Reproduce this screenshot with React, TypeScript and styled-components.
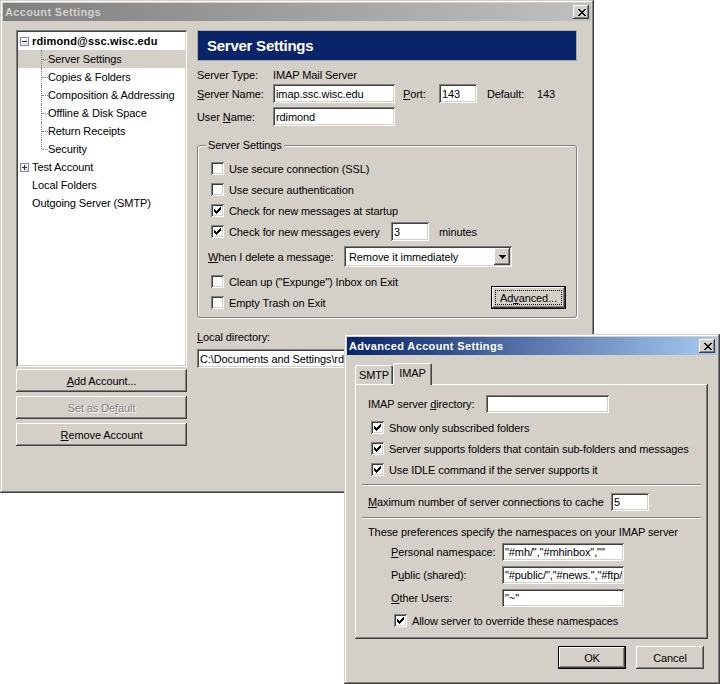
import React from 'react';
import styled, { createGlobalStyle, css } from 'styled-components';

const FACE = '#d4d0c8';
const raised = `inset -1px -1px #404040, inset 1px 1px #fff, inset -2px -2px #808080, inset 2px 2px ${FACE}`;
const raisedDefault = `inset 0 0 0 1px #000, inset -2px -2px #404040, inset 2px 2px #fff, inset -3px -3px #808080, inset 3px 3px ${FACE}`;
const sunken = `inset 1px 1px #808080, inset -1px -1px #fff, inset 2px 2px #404040, inset -2px -2px ${FACE}`;
const frame = `inset -1px -1px #404040, inset 1px 1px ${FACE}, inset -2px -2px #808080, inset 2px 2px #fff`;
const panelFrame = `inset -1px -1px #404040, inset 1px 1px #fff, inset -2px -2px #808080`;

const GlobalStyle = createGlobalStyle`
    html, body {
        margin: 0;
        padding: 0;
        background: #fff;
    }
    body {
        font-family: "Liberation Sans", Arial, sans-serif;
        font-size: 11px;
        letter-spacing: -0.1px;
        color: #000;
    }
    * {
        box-sizing: border-box;
    }
`;

const children = [
    'Server Settings',
    'Copies & Folders',
    'Composition & Addressing',
    'Offline & Disk Space',
    'Return Receipts',
    'Security'
];

const CloseGlyph = () => (
    <svg width="8" height="7" viewBox="0 0 8 7" shapeRendering="crispEdges">
        <path
            d="M0 0h2v1h-2z M6 0h2v1h-2z M1 1h2v1h-2z M5 1h2v1h-2z M2 2h4v1h-4z M3 3h2v1h-2z M2 4h4v1h-4z M1 5h2v1h-2z M5 5h2v1h-2z M0 6h2v1h-2z M6 6h2v1h-2z"
            fill="#000"
        />
    </svg>
);

const Check = ({ checked }: { checked?: boolean }) => (
    <CheckBox>
        {checked && (
            <svg width="13" height="13" viewBox="0 0 13 13" shapeRendering="crispEdges">
                <path
                    d="M9 3h1v1h-1z M8 4h2v1h-2z M3 5h1v1h-1z M7 5h3v1h-3z M3 6h2v1h-2z M6 6h3v1h-3z M3 7h5v1h-5z M4 8h3v1h-3z M5 9h1v1h-1z"
                    fill="#000"
                />
            </svg>
        )}
    </CheckBox>
);

const Expander = ({ open }: { open?: boolean }) => (
    <ExpanderSvg width="9" height="9" viewBox="0 0 9 9" shapeRendering="crispEdges">
        <defs>
            <linearGradient id={open ? 'exp-open' : 'exp-closed'} x1="0" y1="0" x2="1" y2="1">
                <stop offset="0" stopColor="#ffffff" />
                <stop offset="1" stopColor="#dcdad4" />
            </linearGradient>
        </defs>
        <rect x="0.5" y="0.5" width="8" height="8" fill={`url(#${open ? 'exp-open' : 'exp-closed'})`} stroke="#7a8aa8" />
        <path d="M2 4h5v1h-5z" fill="#1e2f52" />
        {!open && <path d="M4 2h1v5h-1z" fill="#1e2f52" />}
    </ExpanderSvg>
);

export default function App() {
    return (
        <>
            <GlobalStyle />
            <Desktop>
                <Win $x={0} $y={0} $w={594} $h={493}>
                    <TitleBar>
                        <span>Account Settings</span>
                        <CloseButton><CloseGlyph /></CloseButton>
                    </TitleBar>
                    <AccountBody>
                        <LeftCol>
                            <Tree>
                                <TreeRow $pad={2} $bold><Expander open />rdimond@ssc.wisc.edu</TreeRow>
                                {children.map((c, i) => (
                                    <TreeRow
                                        key={c}
                                        $pad={30}
                                        $child
                                        $last={i === children.length - 1}
                                        $selected={i === 0}
                                    >
                                        {c}
                                    </TreeRow>
                                ))}
                                <TreeRow $pad={2}><Expander />Test Account</TreeRow>
                                <TreeRow $pad={14}>Local Folders</TreeRow>
                                <TreeRow $pad={14}>Outgoing Server (SMTP)</TreeRow>
                            </Tree>
                            <SideButtons>
                                <Button><Key>A</Key>dd Account...</Button>
                                <Button disabled>Set as De<Key>f</Key>ault</Button>
                                <Button><Key>R</Key>emove Account</Button>
                            </SideButtons>
                        </LeftCol>

                        <RightCol>
                            <PageHeader>Server Settings</PageHeader>
                            <FormRow $mt={5} $h={17}>
                                <Label $w={76}>Server Type:</Label>
                                <span>IMAP Mail Server</span>
                            </FormRow>
                            <FormRow $mt={1}>
                                <Label $w={76}><Key>S</Key>erver Name:</Label>
                                <TextField $w={122} defaultValue="imap.ssc.wisc.edu" readOnly />
                                <Label $w={36} $ml={8}><Key>P</Key>ort:</Label>
                                <TextField $w={38} defaultValue="143" readOnly />
                                <Label $w={50} $ml={10}>Default:</Label>
                                <span>143</span>
                            </FormRow>
                            <FormRow $mt={4}>
                                <Label $w={76}>User <Key>N</Key>ame:</Label>
                                <TextField $w={122} defaultValue="rdimond" readOnly />
                            </FormRow>

                            <Group>
                                <Legend>Server Settings</Legend>
                                <CheckRow><Check /><CheckText>Use secure connection (SSL)</CheckText></CheckRow>
                                <CheckRow><Check /><CheckText>Use secure authentication</CheckText></CheckRow>
                                <CheckRow><Check checked /><CheckText>Check for new messages at startup</CheckText></CheckRow>
                                <CheckRow>
                                    <Check checked />
                                    <CheckText $w={162}>Check for new messages every</CheckText>
                                    <TextField $w={38} defaultValue="3" readOnly />
                                    <Label $ml={10}>minutes</Label>
                                </CheckRow>
                                <FormRow $mt={4} $h={21}>
                                    <Label $w={136}><Key>W</Key>hen I delete a message:</Label>
                                    <SelectBox>
                                        <SelectText>Remove it immediately</SelectText>
                                        <DropButton>
                                            <svg width="7" height="4" viewBox="0 0 7 4" shapeRendering="crispEdges">
                                                <path d="M0 0h7v1h-7z M1 1h5v1h-5z M2 2h3v1h-3z M3 3h1v1h-1z" fill="#000" />
                                            </svg>
                                        </DropButton>
                                    </SelectBox>
                                </FormRow>
                                <BottomRows>
                                    <div>
                                        <CheckRow><Check /><CheckText>Clean up ("Expunge") Inbox on Exit</CheckText></CheckRow>
                                        <CheckRow><Check /><CheckText>Empty Trash on Exit</CheckText></CheckRow>
                                    </div>
                                    <AdvancedButton $w={75} $default>
                                        <FocusRect>Ad<Key>v</Key>anced...</FocusRect>
                                    </AdvancedButton>
                                </BottomRows>
                            </Group>

                            <FormRow $mt={12} $h={14}>
                                <Label><Key>L</Key>ocal directory:</Label>
                            </FormRow>
                            <DirField
                                defaultValue="C:\Documents and Settings\rdimond\Application Data\Thunderbird\Profiles\default\ImapMail\imap.ssc.wisc.edu"
                                readOnly
                            />
                        </RightCol>
                    </AccountBody>
                </Win>

                <Win $x={344} $y={334} $w={376} $h={350}>
                    <TitleBar $active>
                        <span>Advanced Account Settings</span>
                        <CloseButton><CloseGlyph /></CloseButton>
                    </TitleBar>
                    <DialogBody>
                        <Tabs>
                            <Tab $w={38}>SMTP</Tab>
                            <Tab $w={39} $selected>IMAP</Tab>
                        </Tabs>
                        <TabPanel>
                            <Section>
                                <FormRow $mt={10} $h={18}>
                                    <Label $w={118}>IMAP server <Key>d</Key>irectory:</Label>
                                    <TextField $w={123} $h={18} readOnly />
                                </FormRow>
                                <CheckRow $mt={4}><Check checked /><CheckText>Show only subscribed folders</CheckText></CheckRow>
                                <CheckRow><Check checked /><CheckText>Server supports folders that contain sub-folders and messages</CheckText></CheckRow>
                                <CheckRow><Check checked /><CheckText>Use IDLE command if the server supports it</CheckText></CheckRow>
                            </Section>
                            <Separator $mt={4} />
                            <Section>
                                <FormRow $mt={7} $h={18}>
                                    <Label $w={243}><Key>M</Key>aximum number of server connections to cache</Label>
                                    <TextField $w={38} $h={18} defaultValue="5" readOnly />
                                </FormRow>
                            </Section>
                            <Separator $mt={6} />
                            <Section>
                                <Note>These preferences specify the namespaces on your IMAP server</Note>
                                <NsList>
                                    <FormRow $h={18}>
                                        <Label $w={111}><Key>P</Key>ersonal namespace:</Label>
                                        <TextField $w={122} $h={18} defaultValue={'"#mh/","#mhinbox",""'} readOnly />
                                    </FormRow>
                                    <FormRow $h={18}>
                                        <Label $w={111}>P<Key>u</Key>blic (shared):</Label>
                                        <TextField $w={122} $h={18} defaultValue={'"#public/","#news.","#ftp/","#shared/"'} readOnly />
                                    </FormRow>
                                    <FormRow $h={18}>
                                        <Label $w={111}><Key>O</Key>ther Users:</Label>
                                        <TextField $w={122} $h={18} defaultValue={'"~"'} readOnly />
                                    </FormRow>
                                    <CheckRow $mt={-2}>
                                        <Check checked />
                                        <CheckText>Allow server to override these namespaces</CheckText>
                                    </CheckRow>
                                </NsList>
                            </Section>
                        </TabPanel>
                        <DialogButtons>
                            <Button $w={68} $default>OK</Button>
                            <Button $w={68}>Cancel</Button>
                        </DialogButtons>
                    </DialogBody>
                </Win>
            </Desktop>
        </>
    );
}

const Desktop = styled.div`
    position: relative;
    width: 722px;
    height: 684px;
    overflow: hidden;
    background: #fff;
`;

const Win = styled.div<{ $x: number; $y: number; $w: number; $h: number }>`
    position: absolute;
    left: ${p => p.$x}px;
    top: ${p => p.$y}px;
    width: ${p => p.$w}px;
    height: ${p => p.$h}px;
    padding: 3px;
    background: ${FACE};
    box-shadow: ${frame};
    display: flex;
    flex-direction: column;
`;

const TitleBar = styled.div<{ $active?: boolean }>`
    flex: none;
    height: 18px;
    padding: 0 2px;
    display: flex;
    align-items: center;
    justify-content: space-between;
    font-weight: bold;
    font-size: 11px;
    letter-spacing: 0.35px;
    white-space: nowrap;
    color: ${p => (p.$active ? '#fff' : FACE)};
    background: ${p =>
        p.$active
            ? 'linear-gradient(90deg, #0a246a, #a6caf0)'
            : 'linear-gradient(90deg, #808080, #c0c0c0)'};
`;

const CloseButton = styled.div`
    width: 16px;
    height: 14px;
    background: ${FACE};
    box-shadow: ${raised};
    display: flex;
    align-items: center;
    justify-content: center;
    padding-left: 1px;
`;

const AccountBody = styled.div`
    flex: 1;
    display: flex;
    gap: 10px;
    padding: 9px 14px 0 13px;
`;

const LeftCol = styled.div`
    width: 171px;
    flex: none;
    display: flex;
    flex-direction: column;
`;

const Tree = styled.div`
    height: 337px;
    padding: 2px;
    background: #fff;
    box-shadow: ${sunken};
`;

const TreeRow = styled.div<{ $pad: number; $bold?: boolean; $selected?: boolean; $child?: boolean; $last?: boolean }>`
    position: relative;
    height: 18px;
    display: flex;
    align-items: center;
    padding-left: ${p => p.$pad}px;
    white-space: nowrap;
    font-weight: ${p => (p.$bold ? 'bold' : 'normal')};
    letter-spacing: ${p => (p.$bold ? '0.15px' : 'inherit')};
    background: ${p => (p.$selected ? FACE : 'transparent')};
    ${p =>
        p.$child &&
        css`
            &::before {
                content: '';
                position: absolute;
                left: 23px;
                top: 0;
                height: ${p.$last ? 9 : 18}px;
                border-left: 1px dotted #808080;
            }
            &::after {
                content: '';
                position: absolute;
                left: 24px;
                top: 9px;
                width: 6px;
                border-top: 1px dotted #808080;
            }
        `}
`;

const ExpanderSvg = styled.svg`
    display: block;
    flex: none;
    margin-right: 3px;
`;

const SideButtons = styled.div`
    margin-top: 2px;
    display: flex;
    flex-direction: column;
    gap: 4px;
`;

const Button = styled.button<{ $w?: number; $default?: boolean }>`
    width: ${p => (p.$w ? `${p.$w}px` : '100%')};
    height: 23px;
    flex: none;
    margin: 0;
    padding: 0;
    border: none;
    background: ${FACE};
    box-shadow: ${p => (p.$default ? raisedDefault : raised)};
    font: inherit;
    letter-spacing: inherit;
    color: #000;
    display: flex;
    align-items: center;
    justify-content: center;
    white-space: nowrap;

    &:disabled {
        color: #808080;
        text-shadow: 1px 1px #fff;
    }
`;

const AdvancedButton = styled(Button)`
    margin-bottom: 4px;
    align-items: stretch;
`;

const FocusRect = styled.span`
    flex: 1;
    margin: 4px;
    border: 1px dotted #000;
    display: flex;
    align-items: center;
    justify-content: center;
`;

const Key = styled.span`
    text-decoration: underline;
`;

const RightCol = styled.div`
    width: 380px;
    flex: none;
    display: flex;
    flex-direction: column;
`;

const PageHeader = styled.div`
    height: 31px;
    flex: none;
    padding-left: 9px;
    display: flex;
    align-items: center;
    background: #0a246a;
    border: 1px solid #a8a8a8;
    color: #fff;
    font-size: 15px;
    font-weight: bold;
    letter-spacing: -0.25px;
`;

const FormRow = styled.div<{ $mt?: number; $h?: number }>`
    display: flex;
    align-items: center;
    flex: none;
    height: ${p => p.$h ?? 19}px;
    margin-top: ${p => p.$mt ?? 0}px;
    white-space: nowrap;
`;

const Label = styled.span<{ $w?: number; $ml?: number }>`
    flex: none;
    width: ${p => (p.$w ? `${p.$w}px` : 'auto')};
    margin-left: ${p => p.$ml ?? 0}px;
    white-space: nowrap;
`;

const TextField = styled.input<{ $w?: number; $h?: number }>`
    flex: none;
    width: ${p => (p.$w ? `${p.$w}px` : '100%')};
    height: ${p => p.$h ?? 19}px;
    margin: 0;
    padding: 0 2px 0 3px;
    border: none;
    outline: none;
    background: #fff;
    box-shadow: ${sunken};
    font: inherit;
    letter-spacing: inherit;
    color: #000;
`;

const DirField = styled(TextField)`
    margin-top: 5px;
`;

const Group = styled.fieldset`
    margin: 12px 0 0;
    padding: 6px 10px 4px;
    min-width: 0;
    border: 1px solid #808080;
    border-radius: 3px;
    box-shadow: inset 1px 1px #fff, 1px 1px #fff;
`;

const Legend = styled.legend`
    margin-left: -2px;
    padding: 0 2px;
    line-height: 14px;
    background: ${FACE};
`;

const CheckRow = styled.div<{ $mt?: number }>`
    height: 21px;
    margin-top: ${p => p.$mt ?? 0}px;
    display: flex;
    align-items: center;
    white-space: nowrap;
`;

const CheckBox = styled.span`
    flex: none;
    width: 13px;
    height: 13px;
    margin-left: 3px;
    background: #fff;
    box-shadow: ${sunken};
    display: block;

    svg {
        display: block;
    }
`;

const CheckText = styled.span<{ $w?: number }>`
    margin-left: 5px;
    flex: none;
    width: ${p => (p.$w ? `${p.$w}px` : 'auto')};
`;

const SelectBox = styled.div`
    width: 168px;
    height: 21px;
    padding: 2px;
    display: flex;
    align-items: stretch;
    background: #fff;
    box-shadow: ${sunken};
`;

const SelectText = styled.span`
    flex: 1;
    padding-left: 3px;
    display: flex;
    align-items: center;
`;

const DropButton = styled.span`
    width: 16px;
    flex: none;
    background: ${FACE};
    box-shadow: ${raised};
    display: flex;
    align-items: center;
    justify-content: center;
`;

const BottomRows = styled.div`
    margin-top: 4px;
    display: flex;
    align-items: flex-end;
    justify-content: space-between;
`;

const DialogBody = styled.div`
    flex: 1;
    display: flex;
    flex-direction: column;
    padding: 8px 9px 0 8px;
`;

const Tabs = styled.div`
    height: 21px;
    display: flex;
    align-items: flex-end;
`;

const Tab = styled.div<{ $w: number; $selected?: boolean }>`
    position: relative;
    width: ${p => p.$w}px;
    height: ${p => (p.$selected ? 22 : 19)}px;
    margin-bottom: ${p => (p.$selected ? -1 : 0)}px;
    z-index: ${p => (p.$selected ? 1 : 0)};
    padding-bottom: ${p => (p.$selected ? 2 : 0)}px;
    display: flex;
    align-items: center;
    justify-content: center;
    background: ${FACE};
    border-radius: 2px 2px 0 0;
    box-shadow: inset 1px 1px #fff, inset -1px 0 #404040, inset -2px 0 #808080;
`;

const TabPanel = styled.div`
    height: 255px;
    flex: none;
    padding: 1px 7px 0;
    display: flex;
    flex-direction: column;
    background: ${FACE};
    box-shadow: ${panelFrame};
`;

const Section = styled.div`
    padding-left: 6px;
    display: flex;
    flex-direction: column;
`;

const Separator = styled.div<{ $mt: number }>`
    height: 2px;
    flex: none;
    margin-top: ${p => p.$mt}px;
    border-top: 1px solid #808080;
    border-bottom: 1px solid #fff;
`;

const Note = styled.div`
    margin-top: 6px;
    line-height: 14px;
    white-space: nowrap;
`;

const NsList = styled.div`
    margin-top: 4px;
    padding-left: 23px;
    display: flex;
    flex-direction: column;
    gap: 5px;
`;

const DialogButtons = styled.div`
    margin-top: 7px;
    margin-right: 4px;
    display: flex;
    justify-content: flex-end;
    gap: 10px;
`;
